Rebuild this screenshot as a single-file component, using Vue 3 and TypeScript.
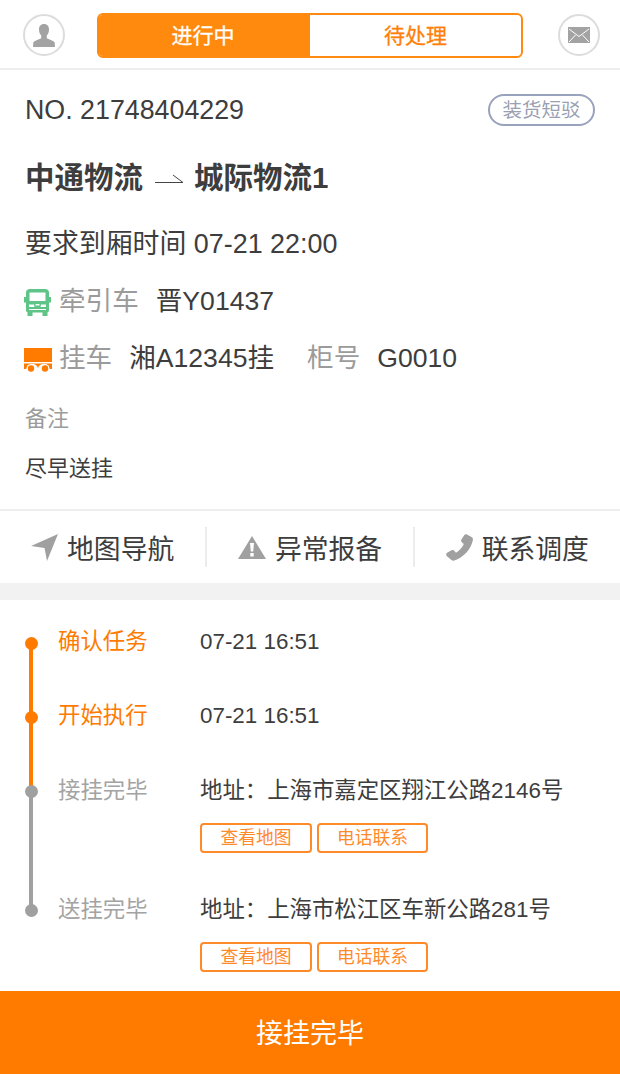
<script setup lang="ts">
const steps = [
  { name: '确认任务', time: '07-21 16:51', done: true },
  { name: '开始执行', time: '07-21 16:51', done: true },
  { name: '接挂完毕', address: '地址：上海市嘉定区翔江公路2146号', done: false },
  { name: '送挂完毕', address: '地址：上海市松江区车新公路281号', done: false },
]
</script>

<template>
  <div class="page">
    <header class="top">
      <div class="round">
        <svg width="22" height="23" viewBox="0 0 22 23"><path fill="#a3a3a3" d="M11 0C7.700 0 6 2.300 6 5.500c0 2.500.8 4.600 2.200 6v2.700C5.500 15.800 1.200 16.300.3 18.500L0 23h22l-.3-4.500c-.9-2.200-5.200-2.700-7.900-4.300v-2.700c1.400-1.400 2.200-3.500 2.200-6C16 2.300 14.300 0 11 0z"/></svg>
      </div>
      <div class="tabs">
        <div class="tab on">进行中</div>
        <div class="tab">待处理</div>
      </div>
      <div class="round">
        <svg width="22" height="16" viewBox="0 0 22 16"><rect width="22" height="16" fill="#a3a3a3"/><path d="M1 2l10 7.500L21 2M1 15l6.500-7M21 15l-6.500-7" stroke="#fff" stroke-width="1" fill="none"/></svg>
      </div>
    </header>

    <section class="info">
      <div class="no-row">
        <span class="no">NO. 21748404229</span>
        <span class="kind">装货短驳</span>
      </div>
      <div class="route">
        <span>中通物流</span>
        <svg width="29" height="10" viewBox="0 0 29 10"><path d="M0 8.500h28L18 1" stroke="#444" stroke-width="1" fill="none"/></svg>
        <span>城际物流1</span>
      </div>
      <div class="line">要求到厢时间 07-21 22:00</div>
      <div class="vehicle">
        <svg class="veh-icon" width="27" height="27" viewBox="0 0 27 27"><path fill="#5fc488" fill-rule="evenodd" d="M6 0h15c2.500 0 4 1.500 4 3.500V8h2v5.500h-2V21c0 1.200-.5 2-1.500 2.300V27h-5v-3.500h-10V27h-5v-3.700C2.500 23 2 22.200 2 21v-7.500H0V8h2V3.500C2 1.500 3.500 0 6 0zm-.5 3.500V12h16V3.500h-16zM5 15.500v2.500h5.500l-.5-2.500H5zm17 0h-5l-.5 2.500H22v-2.500zM11.500 15v1.500h4V15h-4zM5 20v1h17v-1H5z"/></svg>
        <span class="label">牵引车</span>
        <span class="val tractor">晋Y01437</span>
      </div>
      <div class="vehicle">
        <svg class="veh-icon trailer-icon" width="28" height="25" viewBox="0 0 28 25"><path fill="#ff7b00" d="M0 0h28v14H0zM0 15.500h28v5.500h-2.500a6 6 0 0 0-11.500-1 6 6 0 0 0-11.500 1H0z"/><circle cx="7" cy="20.500" r="4.500" fill="#fff"/><circle cx="21" cy="20.500" r="4.500" fill="#fff"/><circle cx="7" cy="20.500" r="3.200" fill="#ff7b00"/><circle cx="21" cy="20.500" r="3.200" fill="#ff7b00"/></svg>
        <span class="label">挂车</span>
        <span class="val trailer">湘A12345挂</span>
        <span class="label box">柜号</span>
        <span class="val number">G0010</span>
      </div>
      <div class="memo-title">备注</div>
      <div class="memo">尽早送挂</div>
    </section>

    <nav class="actions">
      <div class="action">
        <svg width="27" height="27" viewBox="0 0 27 27"><path fill="#a0a0a0" d="M27 0L16 27l-2.500-13L0 12z"/></svg>
        <span>地图导航</span>
      </div>
      <div class="action">
        <svg width="28" height="23" viewBox="0 0 28 23"><path fill="#a0a0a0" fill-rule="evenodd" d="M14 0l14 23H0zM12 7l.8 8.500h2.400L16 7zM12.300 17v3.500h3.400V17z"/></svg>
        <span>异常报备</span>
      </div>
      <div class="action">
        <svg width="27" height="27" viewBox="0 0 27 27"><path fill="#a0a0a0" d="M21 .500l4.500 2.500c1.300.8 1.700 2 1.300 3.500-2.300 9.500-9.500 17-18.500 20-1.500.500-2.700 0-3.500-1L.7 22c-.9-1.400-.5-2.800.8-3.500l4-2.200c1.200-.6 2.300-.4 3 .6l1.500 1.800c3.400-2 6-5 7.800-8.800l-1.800-1.500c-1-.8-1.200-1.900-.6-3L18 1.500c.7-1.200 1.900-1.600 3-1z"/></svg>
        <span>联系调度</span>
      </div>
    </nav>

    <div class="gap"></div>

    <section class="timeline">
      <div v-for="(s, i) in steps" :key="s.name" class="step" :class="{ done: s.done, last: i === steps.length - 1, addr: s.address }">
        <div class="rail"><i class="dot"></i></div>
        <div class="step-name">{{ s.name }}</div>
        <div class="step-body">
          <div class="step-text">{{ s.time || s.address }}</div>
          <div v-if="s.address" class="btns">
            <span class="btn">查看地图</span>
            <span class="btn">电话联系</span>
          </div>
        </div>
      </div>
    </section>

    <div class="submit">接挂完毕</div>
  </div>
</template>

<style scoped>
.page {
  width: 620px;
  height: 1074px;
  overflow: hidden;
  background: #fff;
  color: #3d3d3d;
  font-family: "Liberation Sans", "Noto Sans CJK SC", sans-serif;
  display: flex;
  flex-direction: column;
}

.top {
  height: 70px;
  flex: none;
  box-sizing: border-box;
  border-bottom: 2px solid #eeeeee;
  display: flex;
  align-items: center;
  justify-content: space-between;
  padding: 2px 20px 0 23px;
}

.round {
  width: 42px;
  height: 42px;
  box-sizing: border-box;
  border: 2px solid #dcdcdc;
  border-radius: 50%;
  display: flex;
  align-items: center;
  justify-content: center;
}

.tabs {
  width: 426px;
  height: 45px;
  margin-right: 3px;
  box-sizing: border-box;
  border: 2px solid #ff8a12;
  border-radius: 6px;
  overflow: hidden;
  display: flex;
}

.tab {
  flex: 1;
  text-align: center;
  line-height: 41px;
  font-size: 21px;
  color: #ff7f0a;
  -webkit-text-stroke: 0.3px;
}

.tab.on {
  flex: none;
  width: 211px;
  box-sizing: border-box;
  background: #ff8a0d;
  color: #fff;
  padding-right: 3px;
}

.info {
  flex: none;
  padding: 0 25px;
  height: 441px;
  box-sizing: border-box;
  border-bottom: 2px solid #eeeeee;
}

.no-row {
  display: flex;
  align-items: center;
  justify-content: space-between;
  height: 80px;
}

.no {
  font-size: 26.8px;
}

.kind {
  width: 107px;
  height: 32px;
  box-sizing: border-box;
  border: 2px solid #9aa3bd;
  border-radius: 16px;
  color: #9a9fb2;
  font-size: 19.5px;
  line-height: 28px;
  text-align: center;
}

.route {
  display: flex;
  align-items: center;
  font-size: 29.5px;
  font-weight: 700;
  height: 56px;
  margin-top: -3px;
}

.route svg {
  margin: 7px 10px 0 12px;
}

.line {
  font-size: 26.9px;
  height: 58px;
  margin-top: 12px;
  line-height: 58px;
}

.vehicle {
  font-size: 26.6px;
  height: 57px;
  line-height: 57px;
  white-space: nowrap;
}

.veh-icon {
  margin: 0 8px 0 -1px;
  vertical-align: -6px;
}

.trailer-icon {
  margin-right: 7px;
}

.label {
  color: #9b9b9b;
}

.tractor {
  margin-left: 17px;
}

.trailer {
  margin-left: 17px;
}

.box {
  margin-left: 33px;
}

.number {
  margin-left: 17px;
}

.memo-title {
  font-size: 22px;
  color: #9b9b9b;
  margin-top: 13px;
}

.memo {
  font-size: 22px;
  margin-top: 18px;
}

.actions {
  height: 72px;
  display: flex;
  align-items: center;
  flex: none;
}

.action {
  flex: 1;
  height: 40px;
  display: flex;
  align-items: center;
  justify-content: center;
  gap: 9px;
  font-size: 26.8px;
  border-right: 2px solid #ececec;
}

.action:last-child {
  border-right: 0;
}

.gap {
  height: 17px;
  background: #f2f2f2;
  flex: none;
}

.timeline {
  flex: 1;
  min-height: 0;
  padding-top: 25px;
}

.step {
  display: flex;
  height: 74px;
  font-size: 22.4px;
}

.step.addr {
  height: 119px;
}

.rail {
  width: 58px;
  position: relative;
  flex: none;
}

.rail::before {
  content: "";
  position: absolute;
  left: 29px;
  top: 18px;
  bottom: -18px;
  width: 4px;
  background: #ff7b00;
}

.step.addr .rail::before {
  background: #a0a0a0;
}

.step.last .rail::before {
  display: none;
}

.dot {
  position: absolute;
  left: 25px;
  top: 12px;
  width: 13px;
  height: 13px;
  border-radius: 50%;
  background: #a0a0a0;
  z-index: 1;
}

.step.done .dot {
  background: #ff7b00;
}

.step-name {
  width: 142px;
  color: #a3a3a3;
  line-height: 36px;
}

.step.done .step-name {
  color: #ff7b00;
  line-height: 34px;
}

.step-text {
  line-height: 36px;
}

.step.done .step-text {
  line-height: 34px;
}

.btns {
  display: flex;
  gap: 5px;
  margin-top: 14px;
}

.btn {
  width: 112px;
  height: 30px;
  box-sizing: border-box;
  border: 2px solid #ff8a2a;
  border-radius: 4px;
  color: #ff8a2a;
  font-size: 17.8px;
  line-height: 26px;
  text-align: center;
}

.btn:last-child {
  width: 111px;
}

.submit {
  height: 83px;
  background: #ff7b00;
  color: #fff;
  font-size: 27px;
  line-height: 87px;
  text-align: center;
  flex: none;
}
</style>
